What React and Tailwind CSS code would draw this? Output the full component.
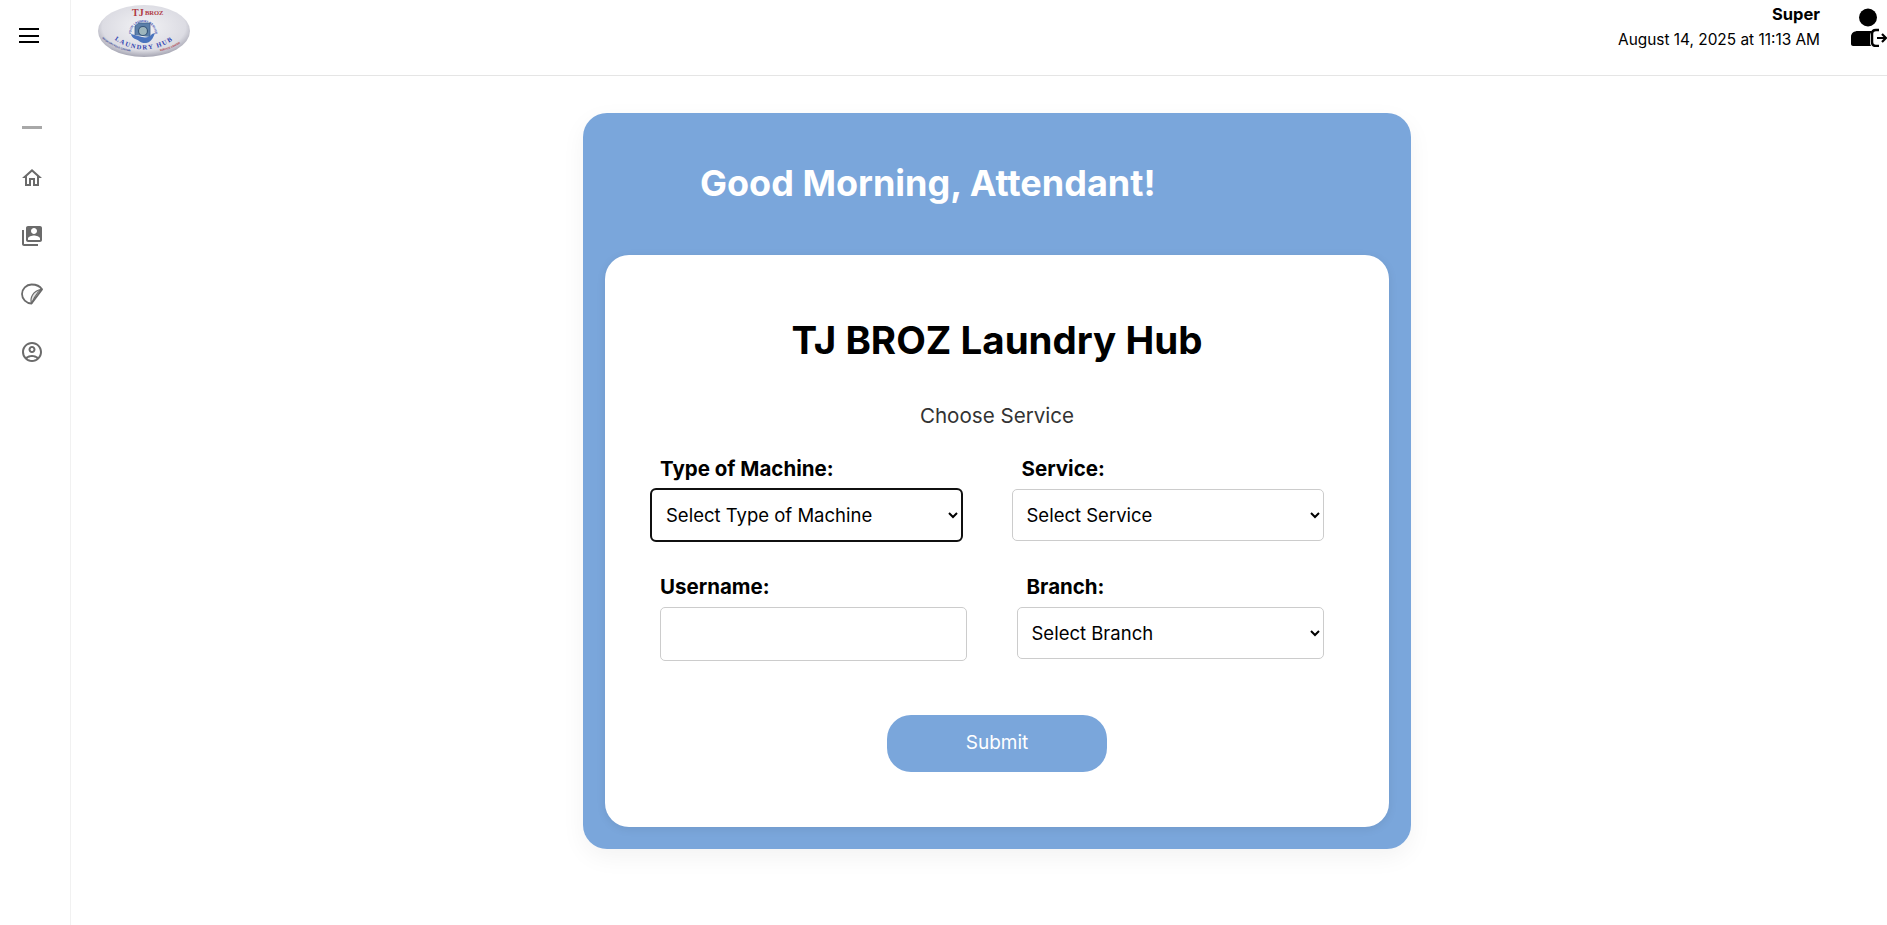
import React from 'react';
import { MdOutlineHome, MdSwitchAccount, MdOutlineAccountCircle } from 'react-icons/md';

const font = "font-['Inter','Liberation_Sans',sans-serif]";

function StickerIcon() {
  return (
    <svg viewBox="0 0 24 24" className="w-[24px] h-[24px]" fill="none" stroke="currentColor" strokeWidth="1.8" strokeLinejoin="round">
      <path d="M11.500 21.500c-5.200 0-9.500-4.300-9.500-9.500S6.300 2.500 11.500 2.500c4.500 0 8.500 1.500 10.500 5L11.500 21.500z" />
      <path d="M11.500 21.500c-1-3-.5-6 1-8.500s5-5 9.500-6c-4 2.500-6 5.500-7.500 8.500z" fill="currentColor" fillOpacity="0.2" strokeWidth="1.2" />
    </svg>
  );
}

function LogoutUserIcon() {
  return (
    <svg viewBox="0 0 36 39" className="w-[36px] h-[39px]" fill="currentColor">
      <circle cx="17" cy="9.500" r="9" />
      <g transform="translate(0 1)">
        <path d="M0 35V28c0-4 3-6 7-6h15c-2 1-3 2.500-3 5v7c0 1 .5 2 1 3H2c-1 0-2-1-2-2z" />
        <path d="M28 21h-3c-2.500 0-4 1.500-4 4v8c0 2.500 1.500 4 4 4h3" fill="none" stroke="currentColor" strokeWidth="2.500" />
        <path d="M26 29h9M31 25l4 4-4 4" fill="none" stroke="currentColor" strokeWidth="2.200" />
      </g>
    </svg>
  );
}

function Logo() {
  return (
    <svg viewBox="0 0 92 52" className="w-[92px] h-[52px]">
      <defs>
        <radialGradient id="logoFill" cx="50%" cy="42%" r="58%">
          <stop offset="0%" stopColor="#f2f2f5" />
          <stop offset="78%" stopColor="#dcdce3" />
          <stop offset="100%" stopColor="#a5a5b2" />
        </radialGradient>
        <path id="hubArc" d="M14 33 Q46 56 78 33" fill="none" />
        <path id="leftArc" d="M4 33 Q14 43 34 47" fill="none" />
        <path id="rightArc" d="M62 46 Q76 44 88 34" fill="none" />
        <path id="ringArc" d="M33 29 A12 12 0 0 1 57 29" fill="none" />
      </defs>
      <ellipse cx="46" cy="26" rx="46" ry="26" fill="url(#logoFill)" />
      <text x="34" y="11" fontSize="10" fontWeight="700" fill="#b0383f" fontFamily="Liberation Serif, serif">TJ</text>
      <text x="47" y="10" fontSize="6.500" fontWeight="700" fill="#b0383f" fontFamily="Liberation Serif, serif">BROZ</text>
      <text fontSize="3" fontWeight="700" fill="#3346ad" fontFamily="Liberation Sans, sans-serif">
        <textPath href="#ringArc" startOffset="50%" textAnchor="middle">YOUR LAUNDRY SERVICE</textPath>
      </text>
      <path d="M37 30v-9l4-3h11v14" fill="#5b7fa9" stroke="#3d5f8f" strokeWidth="0.800" />
      <circle cx="45" cy="26" r="4.500" fill="#9eb6bd" stroke="#37567a" strokeWidth="1.200" />
      <path d="M33 29c1 5 6 5 8 7s7 3 10 1 4-4 6-9l-3 1c-2 3-6 4-10 3s-7-2-11-3z" fill="#4a74bd" />
      <text fontSize="6.500" fontWeight="700" fill="#2f3fb0" letterSpacing="1.400" fontFamily="Liberation Serif, serif">
        <textPath href="#hubArc" startOffset="50%" textAnchor="middle">LAUNDRY HUB</textPath>
      </text>
      <text fontSize="2.500" fontWeight="700" fill="#2f3f90" fontFamily="Liberation Sans, sans-serif">
        <textPath href="#leftArc">WASH DRY FOLD CENTER</textPath>
      </text>
      <text fontSize="2.500" fontWeight="700" fill="#b0383f" fontFamily="Liberation Sans, sans-serif">
        <textPath href="#rightArc">SERVICE CENTER</textPath>
      </text>
    </svg>
  );
}

const inputClass = "rounded-[5px] border border-[#cccccc] bg-white pl-[10px] pr-0 text-[18.5px] text-black";

function Field({ label, className, labelClass, children }) {
  return (
    <div className={className}>
      <label className={`block text-[20.5px] font-bold leading-[28px] text-black mb-[6px] ${labelClass}`}>{label}</label>
      {children}
    </div>
  );
}

export default function App() {
  const navIcons = [
    { icon: <MdOutlineHome className="w-[24px] h-[24px]" />, name: 'home' },
    { icon: <MdSwitchAccount className="w-[24px] h-[24px]" />, name: 'accounts' },
    { icon: <StickerIcon />, name: 'sticker' },
    { icon: <MdOutlineAccountCircle className="w-[24px] h-[24px]" />, name: 'profile' },
  ];

  return (
    <div className={`flex h-[925px] w-full overflow-hidden bg-white ${font}`}>
      {/* Sidebar */}
      <aside className="w-[71px] shrink-0 border-r border-[#f1f1f1] flex flex-col items-start">
        <div className="mt-[28px] ml-[19px] flex flex-col gap-[4.5px] w-[20px]">
          <span className="h-[2px] bg-black"></span>
          <span className="h-[2px] bg-black"></span>
          <span className="h-[2px] bg-black"></span>
        </div>
        <div className="mt-[83px] ml-[22px] w-[20px] h-[3px] bg-[#a8a8a8]"></div>
        <nav className="mt-[37px] ml-[20px] flex flex-col gap-[34px] text-[#6b6b6b]">
          {navIcons.map(item => (
            <div key={item.name} className="w-[24px] h-[24px] flex items-center justify-center">{item.icon}</div>
          ))}
        </nav>
      </aside>

      <div className="flex-1 min-w-0">
        {/* Header */}
        <header className="ml-[8px] h-[76px] border-b border-[#e5e5e5] flex justify-between">
          <div className="ml-[19px] mt-[5px]"><Logo /></div>
          <div className="flex items-start text-black">
            <div className="text-right mt-[2px] text-[15.4px] leading-[25px]">
              <div className="font-bold text-[16.5px]">Super</div>
              <div>August 14, 2025 at 11:13 AM</div>
            </div>
            <div className="ml-[31px] mt-[8px]"><LogoutUserIcon /></div>
          </div>
        </header>

        {/* Main card */}
        <main className="flex justify-center pt-[37px] pl-[36px]">
          <div className="w-[828px] h-[736px] rounded-[24px] bg-[#7aa6db] shadow-[0_8px_24px_rgba(0,0,0,0.05)] px-[22px] pt-[22px]">
            <h2 className="pl-[95px] h-[120px] pt-[24px] text-[36px] leading-[48px] font-bold text-white">Good Morning, Attendant!</h2>
            <div className="h-[572px] rounded-[24px] bg-white shadow-[0_2px_10px_rgba(0,0,0,0.08)] pl-[46px] pr-[65px] pt-[57px]">
              <h1 className="text-center text-[38.5px] leading-[56px] font-bold text-black ml-[-46px] mr-[-65px]">TJ BROZ Laundry Hub</h1>
              <p className="mt-[33px] text-center text-[20.6px] leading-[30px] text-[#333333] ml-[-46px] mr-[-65px]">Choose Service</p>
              <div className="mt-[24px] flex gap-[50px]">
                <Field label="Type of Machine:" className="w-[311px]" labelClass="pl-[9px]">
                  <select className={`${inputClass} h-[52px] w-full outline-2 outline-[#101010] outline-offset-[-1px]`} defaultValue="">
                    <option value="">Select Type of Machine</option>
                  </select>
                </Field>
                <Field label="Service:" className="w-[313px]" labelClass="pl-[10px]">
                  <select className={`${inputClass} h-[52px] w-full`} defaultValue="">
                    <option value="">Select Service</option>
                  </select>
                </Field>
              </div>
              <div className="mt-[32px] pl-[9px] flex gap-[50px]">
                <Field label="Username:" className="w-[307px]">
                  <input type="text" className={`${inputClass} w-full h-[54px]`} />
                </Field>
                <Field label="Branch:" className="w-[308px]" labelClass="pl-[10px]">
                  <select className={`${inputClass} h-[52px] w-full`} defaultValue="">
                    <option value="">Select Branch</option>
                  </select>
                </Field>
              </div>
              <div className="mt-[54px] ml-[-46px] mr-[-65px] flex justify-center">
                <button className="w-[220px] h-[57px] rounded-[24px] bg-[#7aa6db] text-white text-[19px]">Submit</button>
              </div>
            </div>
          </div>
        </main>
      </div>
    </div>
  );
}
